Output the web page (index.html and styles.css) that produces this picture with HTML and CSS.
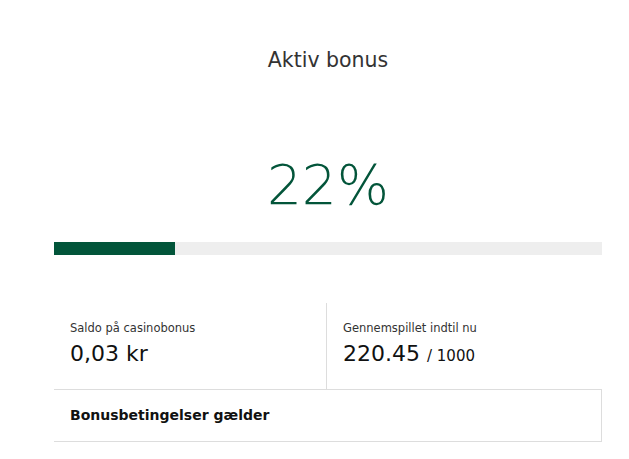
FILE: index.html
```html
<!DOCTYPE html>
<html lang="da">
<head>
<meta charset="utf-8">
<link rel="stylesheet" href="styles.css">
</head>
<body>
<main class="bonus">
  <h1 class="title">Aktiv bonus</h1>
  <div class="percent">22%</div>
  <div class="bar"><div class="bar-fill" style="width:22%"></div></div>
  <div class="stats">
    <div class="stat stat-left">
      <div class="label">Saldo på casinobonus</div>
      <div class="value">0,03 kr</div>
    </div>
    <div class="stat">
      <div class="label">Gennemspillet indtil nu</div>
      <div class="value">220.45 <span class="of">/ 1000</span></div>
    </div>
  </div>
  <div class="terms">Bonusbetingelser gælder</div>
</main>
</body>
</html>
```
FILE: styles.css
```css
html, body {
  margin: 0;
  padding: 0;
  background: #ffffff;
}
body {
  font-family: "DejaVu Sans", "Open Sans", sans-serif;
  color: #111;
}
.bonus {
  width: 548px;
  margin-left: 54px;
  padding-top: 46px;
}
.title {
  margin: 0;
  text-align: center;
  font-size: 20.5px;
  font-weight: 400;
  color: #333;
  line-height: 28px;
}
.percent {
  margin-top: 81px;
  text-align: center;
  font-size: 55px;
  font-weight: 300;
  color: #03553a;
  line-height: 60px;
}
.bar {
  margin-top: 27px;
  height: 13px;
  background: #eeeeee;
}
.bar-fill {
  height: 100%;
  background: #02553a;
}
.stats {
  margin-top: 48px;
  display: grid;
  grid-template-columns: 273px 1fr;
}
.stat {
  padding: 17px 16px 19px 16px;
  border-bottom: 1px solid #dddddd;
}
.stat-left {
  border-right: 1px solid #dddddd;
}
.label {
  font-size: 11.5px;
  color: #333;
  line-height: 16px;
}
.value {
  margin-top: 4px;
  font-size: 22px;
  line-height: 28px;
  color: #111;
}
.of {
  font-size: 15px;
}
.terms {
  padding: 16px 16px 17px 16px;
  border-right: 1px solid #dddddd;
  border-bottom: 1px solid #dddddd;
  font-size: 14px;
  font-weight: 600;
  line-height: 18px;
  color: #111;
}
```
